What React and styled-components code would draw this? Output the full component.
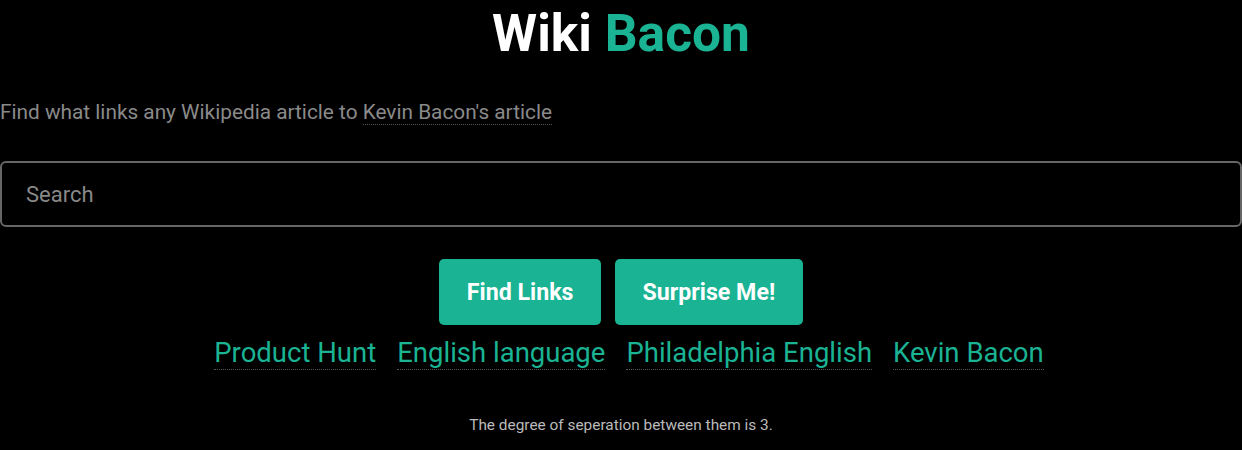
import React from "react";
import styled, { createGlobalStyle } from "styled-components";

const GlobalStyle = createGlobalStyle`
  html, body {
    margin: 0;
    padding: 0;
    background: #000;
    font-family: Roboto, "Liberation Sans", sans-serif;
  }
`;

const Page = styled.main`
  width: 1242px;
  display: flex;
  flex-direction: column;
  align-items: center;
`;

const Title = styled.h1`
  margin: 4px 0 0;
  font-size: 51.5px;
  font-weight: 700;
  line-height: 60px;
  color: #fff;
`;

const Accent = styled.span`
  color: #1ab394;
`;

const Subtitle = styled.p`
  align-self: flex-start;
  margin: 36px 0 0;
  font-size: 20.8px;
  line-height: 24px;
  color: #8a8a8a;
`;

const DottedLink = styled.a`
  color: ${(p) => p.$color || "inherit"};
  text-decoration: none;
  border-bottom: 1px dotted #555;
`;

const SearchInput = styled.input`
  box-sizing: border-box;
  width: 100%;
  height: 66px;
  margin-top: 37px;
  padding: 0 24px;
  border: 2px solid #666;
  border-radius: 6px;
  background: #000;
  color: #ddd;
  font-family: inherit;
  font-size: 22px;
  outline: 0;

  &::placeholder {
    color: #888;
  }
`;

const ButtonArea = styled.div`
  display: flex;
  gap: 14px;
  margin-top: 32px;
`;

const Button = styled.button`
  height: 66px;
  padding: 0 27.5px;
  border: none;
  border-radius: 5px;
  background: #1ab394;
  color: #fff;
  font-family: inherit;
  font-size: 23.2px;
  font-weight: 700;
  cursor: pointer;
`;

const LinkRow = styled.div`
  display: flex;
  gap: 21px;
  margin-top: 12px;
  padding-left: 16px;
  font-size: 27.5px;
  line-height: 32px;
`;

const Result = styled.p`
  margin: 46px 0 0;
  font-size: 15.4px;
  color: #bbb;
`;

const path = ["Product Hunt", "English language", "Philadelphia English", "Kevin Bacon"];

export default function App() {
  return (
    <Page>
      <GlobalStyle />
      <Title>
        Wiki <Accent>Bacon</Accent>
      </Title>
      <Subtitle>
        Find what links any Wikipedia article to{" "}
        <DottedLink href="#">Kevin Bacon's article</DottedLink>
      </Subtitle>
      <SearchInput placeholder="Search" />
      <ButtonArea>
        <Button>Find Links</Button>
        <Button>Surprise Me!</Button>
      </ButtonArea>
      <LinkRow>
        {path.map((name) => (
          <DottedLink key={name} href="#" $color="#1ab394">
            {name}
          </DottedLink>
        ))}
      </LinkRow>
      <Result>The degree of seperation between them is 3.</Result>
    </Page>
  );
}
